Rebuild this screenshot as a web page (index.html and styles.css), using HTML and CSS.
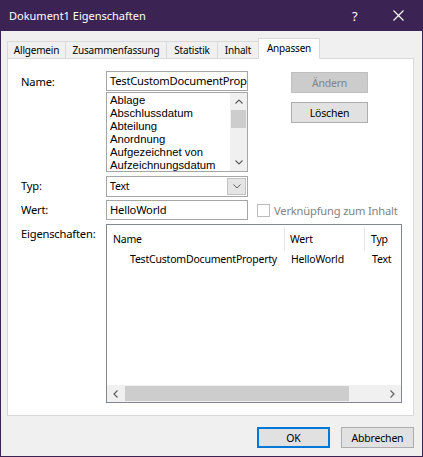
FILE: index.html
```html
<!DOCTYPE html>
<html lang="de">
<head>
<meta charset="utf-8">
<title>Dokument1 Eigenschaften</title>
<link rel="stylesheet" href="styles.css">
</head>
<body>
<div class="window">
  <div class="titlebar">
    <span class="title">Dokument1 Eigenschaften</span>
    <span class="help">?</span>
    <span class="close"><svg width="11" height="11" viewBox="0 0 11 11"><path d="M0.5 0.5 L10.5 10.5 M10.5 0.5 L0.5 10.5" stroke="#fff" stroke-width="1.1" fill="none"/></svg></span>
  </div>
  <div class="client">
    <div class="tabs">
      <div class="tab t-allg">Allgemein</div>
      <div class="tab t-zus">Zusammenfassung</div>
      <div class="tab t-stat">Statistik</div>
      <div class="tab t-inh">Inhalt</div>
      <div class="tab t-anp active">Anpassen</div>
    </div>
    <div class="pane">
      <div class="sec-name">
        <div class="lbl">Name:</div>
        <div class="fields">
          <div class="textbox name-box">TestCustomDocumentProp</div>
          <div class="listbox">
            <div class="items">
              <div>Ablage</div>
              <div>Abschlussdatum</div>
              <div>Abteilung</div>
              <div>Anordnung</div>
              <div>Aufgezeichnet von</div>
              <div>Aufzeichnungsdatum</div>
            </div>
            <div class="vscroll">
              <div class="varrow"><svg width="8" height="5" viewBox="0 0 8 5"><path d="M0.5 4.5 L4 1 L7.5 4.5" stroke="#606060" stroke-width="1.2" fill="none"/></svg></div>
              <div class="vthumb"></div>
              <div class="vtrack"></div>
              <div class="varrow"><svg width="8" height="5" viewBox="0 0 8 5"><path d="M0.5 0.5 L4 4 L7.5 0.5" stroke="#606060" stroke-width="1.2" fill="none"/></svg></div>
            </div>
          </div>
        </div>
        <div class="side-btns">
          <div class="btn disabled">Ändern</div>
          <div class="btn btn-del">Löschen</div>
        </div>
      </div>
      <div class="row row-typ">
        <div class="lbl">Typ:</div>
        <div class="combo">
          <span class="combo-text">Text</span>
          <span class="combo-btn"><svg width="8" height="5" viewBox="0 0 8 5"><path d="M0.5 0.5 L4 4 L7.5 0.5" stroke="#606060" stroke-width="1" fill="none"/></svg></span>
        </div>
      </div>
      <div class="row row-wert">
        <div class="lbl">Wert:</div>
        <div class="textbox wert-box">HelloWorld</div>
        <span class="checkbox"></span>
        <span class="check-label">Verknüpfung zum Inhalt</span>
      </div>
      <div class="row row-props">
        <div class="lbl">Eigenschaften:</div>
        <div class="listview">
          <div class="lv-body">
            <div class="lv-head">
              <div class="c1">Name</div>
              <div class="c2">Wert</div>
              <div class="c3">Typ</div>
            </div>
            <div class="lv-row">
              <div class="c1 indent">TestCustomDocumentProperty</div>
              <div class="c2">HelloWorld</div>
              <div class="c3">Text</div>
            </div>
          </div>
          <div class="hscroll">
            <div class="harrow"><svg width="5" height="8" viewBox="0 0 5 8"><path d="M4.5 0.5 L1 4 L4.5 7.5" stroke="#606060" stroke-width="1.2" fill="none"/></svg></div>
            <div class="hthumb"></div>
            <div class="htrack"></div>
            <div class="harrow"><svg width="5" height="8" viewBox="0 0 5 8"><path d="M0.5 0.5 L4 4 L0.5 7.5" stroke="#606060" stroke-width="1.2" fill="none"/></svg></div>
          </div>
        </div>
      </div>
    </div>
    <div class="footer">
      <div class="btn btn-ok">OK</div>
      <div class="btn btn-cancel">Abbrechen</div>
    </div>
  </div>
</div>
</body>
</html>
```

FILE: styles.css
```css
* { box-sizing: border-box; }
html, body { margin: 0; padding: 0; }
body {
  font-family: "Noto Sans", "Liberation Sans", sans-serif;
  font-size: 11.2px;
  letter-spacing: -0.2px;
  color: #000;
  background: #f0f0f0;
}
.window {
  width: 423px;
  height: 457px;
  display: flex;
  flex-direction: column;
}
.titlebar {
  height: 31px;
  flex: none;
  background: #3b2453;
  color: #fff;
  display: flex;
  align-items: center;
  padding-left: 9px;
}
.title { font-size: 11px; letter-spacing: 0; flex: 1; }
.help { font-size: 13px; width: 20px; margin-right: 21px; text-align: left; }
.close { width: 11px; height: 11px; margin-right: 19px; display: flex; }
.client {
  flex: 1;
  border: 1px solid #3b2453;
  border-top: none;
  background: #f0f0f0;
  padding: 7px 7px 0 6px;
  display: flex;
  flex-direction: column;
}
.tabs {
  display: flex;
  align-items: flex-end;
  height: 21px;
  margin-bottom: -1px;
  position: relative;
  z-index: 1;
  font-size: 10px;
}
.tab {
  height: 18px;
  border: 1px solid #d9d9d9;
  border-right: none;
  background: #f0f0f0;
  display: flex;
  align-items: center;
  justify-content: center;
  white-space: nowrap;
}
.t-allg { width: 58px; }
.t-zus { width: 101px; }
.t-stat { width: 51px; }
.t-inh { width: 41px; }
.tab.active {
  width: 62px;
  height: 21px;
  background: #fff;
  border-right: 1px solid #d9d9d9;
  border-bottom: 1px solid #fff;
  padding-bottom: 2px;
}
.pane {
  width: 407px;
  height: 358px;
  border: 1px solid #d9d9d9;
  background: #fff;
  padding: 12px 0 0 13px;
}
.lbl { width: 85px; flex: none; line-height: 20px; }
.sec-name .lbl { padding-top: 1px; }
.sec-name { display: flex; align-items: flex-start; }
.fields { width: 142px; flex: none; }
.textbox {
  height: 20px;
  border: 1px solid #a6a6a6;
  padding: 0 3px;
  line-height: 18px;
  white-space: nowrap;
  overflow: hidden;
  background: #fff;
}
.name-box { padding-right: 0; letter-spacing: -0.22px; }
.listbox {
  margin-top: 1px;
  height: 80px;
  border: 1px solid #a6a6a6;
  display: flex;
}
.items {
  flex: 1;
  padding: 1px 0 0 3px;
  font-family: "Liberation Sans", "Noto Sans", sans-serif;
  font-size: 11.3px;
  letter-spacing: 0;
  line-height: 13px;
  overflow: hidden;
  white-space: nowrap;
}
.vscroll {
  width: 17px;
  flex: none;
  background: #f0f0f0;
  display: flex;
  flex-direction: column;
}
.varrow { height: 17px; display: flex; align-items: center; justify-content: center; }
.vthumb { height: 18px; margin: 0 1px; background: #cdcdcd; }
.vtrack { flex: 1; }
.side-btns { margin-left: 43px; padding-top: 1px; width: 77px; font-size: 10.5px; }
.btn {
  height: 21px;
  border: 1px solid #adadad;
  background: #e1e1e1;
  display: flex;
  align-items: center;
  justify-content: center;
}
.btn.disabled { background: #cccccc; border-color: #bfbfbf; color: #838383; }
.btn-del { margin-top: 9px; }
.row { display: flex; align-items: flex-start; }
.row-typ { margin-top: 4px; }
.combo {
  width: 142px;
  height: 21px;
  border: 1px solid #a6a6a6;
  display: flex;
  align-items: flex-start;
  padding-left: 3px;
}
.combo-text { flex: 1; line-height: 19px; font-size: 10.5px; }
.combo-btn {
  width: 19px;
  height: 17px;
  margin: 1px 1px 0 0;
  background: #e5e5e5;
  border: 1px solid #c2c2c2;
  display: flex;
  align-items: center;
  justify-content: center;
}
.row-wert { margin-top: 3px; align-items: center; }
.wert-box { width: 142px; }
.checkbox {
  width: 13px;
  height: 13px;
  margin-left: 9px;
  border: 1px solid #bcbcbc;
  background: #fff;
}
.check-label { margin-left: 4px; color: #838383; white-space: nowrap; }
.row-props { margin-top: 4px; }
.listview {
  width: 296px;
  height: 179px;
  border: 1px solid #828790;
  display: flex;
  flex-direction: column;
  font-size: 10.5px;
}
.lv-body { flex: 1; overflow: hidden; }
.lv-head { display: flex; padding-top: 2px; height: 26px; }
.lv-head > div { height: 24px; line-height: 24px; }
.lv-head .c1, .lv-head .c2 { border-right: 1px solid #e5e5e5; }
.c1 { width: 178px; padding-left: 6px; flex: none; white-space: nowrap; }
.c2 { width: 80px; padding-left: 5px; flex: none; white-space: nowrap; }
.c3 { flex: 1; padding-left: 6px; white-space: nowrap; }
.lv-row { display: flex; height: 17px; line-height: 17px; }
.lv-row .c1.indent { padding-left: 23px; }
.lv-row .c2 { padding-left: 6px; }
.lv-row .c3 { padding-left: 7px; }
.hscroll {
  height: 17px;
  flex: none;
  background: #f0f0f0;
  display: flex;
}
.harrow { width: 17px; display: flex; align-items: center; justify-content: center; }
.hthumb { width: 224px; margin: 1px 0 1px 1px; background: #cdcdcd; }
.htrack { flex: 1; }
.footer {
  margin-top: 11px;
  display: flex;
  justify-content: flex-end;
  gap: 11px;
  padding-right: 1px;
  font-size: 10.5px;
}
.footer .btn { width: 73px; }
.btn-ok { border: 2px solid #0078d7; }
```
